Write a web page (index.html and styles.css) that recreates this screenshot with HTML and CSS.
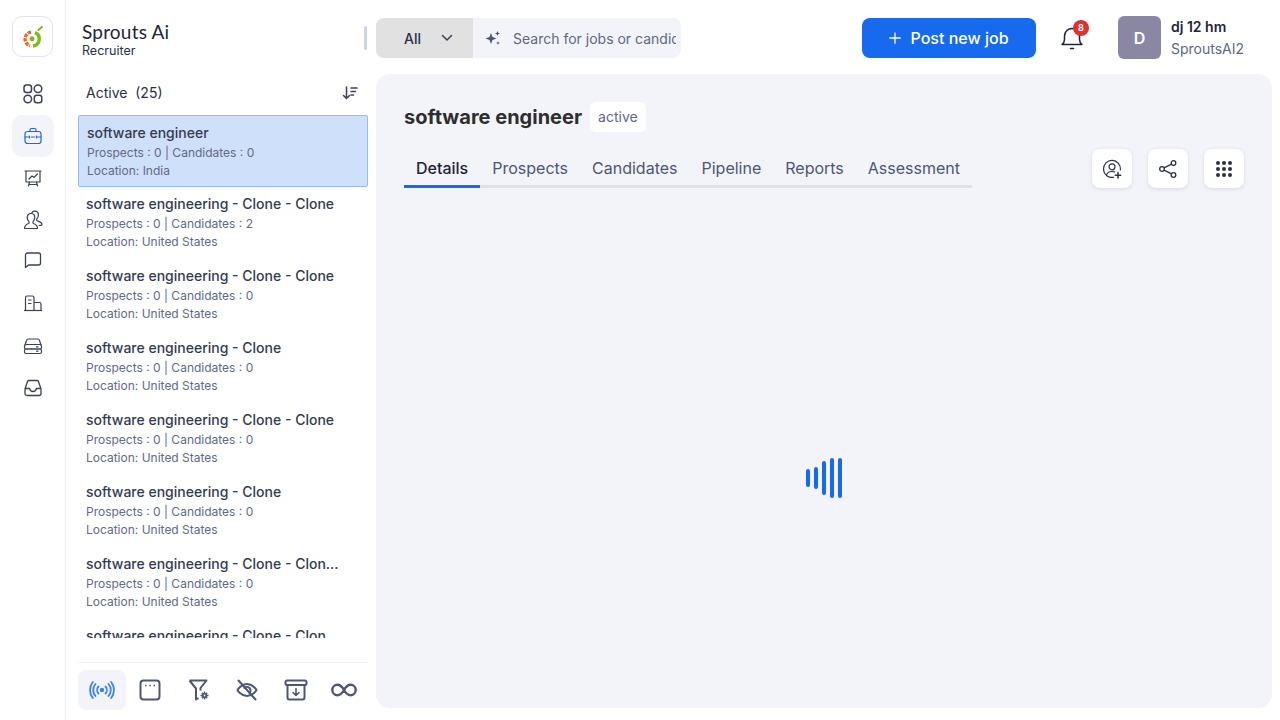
FILE: index.html
```html
<!DOCTYPE html>
<html>
<head>
  <title>Sprouts Ai Recruiter</title>
  <link rel="stylesheet" href="styles.css">
</head>
<body>
  <div class="app">
    <!-- Icon rail -->
    <nav class="rail">
      <div class="logo-box">
        <svg width="24" height="24" viewBox="0 0 24 24" fill="none">
          <path d="M10 7.100A7 7 0 0 0 9 20.700" stroke="#f0672b" stroke-width="3.400" stroke-dasharray="3.400 1"/>
          <path d="M12 21a7 7 0 0 0 2-13.400" stroke="#84b81f" stroke-width="3.400"/>
          <circle cx="11" cy="13.800" r="2.500" fill="#84b81f"/>
          <path d="M17.500 5l3.500-3.200" stroke="#84b81f" stroke-width="2" stroke-linecap="round"/>
        </svg>
      </div>
      <a class="rail-btn">
        <svg width="22" height="22" viewBox="0 0 22 22" fill="none" stroke="#3b4157" stroke-width="1.500">
          <rect x="2" y="2" width="7.500" height="7.500" rx="2.500"/><circle cx="16" cy="5.800" r="3.800"/><circle cx="5.800" cy="16" r="3.800"/><rect x="12.300" y="12.300" width="7.500" height="7.500" rx="2.500"/>
        </svg>
      </a>
      <a class="rail-btn rail-btn-active">
        <svg width="20" height="20" viewBox="0 0 20 20" fill="none" stroke="#1769ee" stroke-width="1.200" stroke-linecap="round">
          <rect x="2" y="5.500" width="16" height="12" rx="2.500"/><path d="M7 5.500V4a1.500 1.500 0 0 1 1.500-1.500h3A1.500 1.500 0 0 1 13 4v1.500"/><path d="M2 11h3.500M8.500 11h3M14.500 11H18"/><path d="M6.500 10v2M13.500 10v2"/>
        </svg>
      </a>
      <a class="rail-btn">
        <svg width="20" height="20" viewBox="0 0 20 20" fill="none" stroke="#3b4157" stroke-width="1.200" stroke-linecap="round" stroke-linejoin="round">
          <path d="M2 3h16M3 3v11h14V3"/><path d="M6 11l3-3 2 1.500L14.500 6"/><path d="M6.500 14L5.500 18M13.500 14l1 4M5.800 16.500h8.400"/>
        </svg>
      </a>
      <a class="rail-btn">
        <svg width="20" height="20" viewBox="0 0 20 20" fill="none" stroke="#3b4157" stroke-width="1.200" stroke-linecap="round" stroke-linejoin="round">
          <path d="M1.500 18.500c0-3 1.500-4 4-5 .8-.4.800-1.500.2-2.200C4.500 10 4.200 8.800 4.200 7.500 4.200 5 6 3.500 8 3.500S11.800 5 11.800 7.500c0 1.300-.3 2.500-1.500 3.800-.6.700-.6 1.800.2 2.200 2.500 1 4 2 4 5z"/>
          <path d="M9 2.500C9.700 1.800 10.500 1.200 11.700 1.200c2 0 3.700 1.500 3.700 4 0 1.300-.4 2.500-1.500 3.700-.5.700-.4 1.500.4 1.900 2 .8 4.700 1.400 4.700 3.700 0 .6-1 1-3 1"/>
        </svg>
      </a>
      <a class="rail-btn">
        <svg width="20" height="20" viewBox="0 0 20 20" fill="none" stroke="#3b4157" stroke-width="1.300" stroke-linejoin="round">
          <path d="M2.500 15.500V3a2 2 0 0 1 2-2h11a2 2 0 0 1 2 2v8a2 2 0 0 1-2 2H5.500z"/>
        </svg>
      </a>
      <a class="rail-btn">
        <svg width="20" height="20" viewBox="0 0 20 20" fill="none" stroke="#3b4157" stroke-width="1.200">
          <path d="M1 16.500h18"/><path d="M2.500 16.500V3.500A1.500 1.500 0 0 1 4 2h5.500A1.500 1.500 0 0 1 11 3.500v13"/><path d="M11 8.500h5.500a1.500 1.500 0 0 1 1.500 1.500v6.500"/><path d="M5 6h3.500M5 9.500h3.500"/>
        </svg>
      </a>
      <a class="rail-btn">
        <svg width="20" height="20" viewBox="0 0 20 20" fill="none" stroke="#3b4157" stroke-width="1.200" stroke-linecap="round">
          <path d="M2 9l1.500-4.500A2 2 0 0 1 5.400 3h9.200a2 2 0 0 1 1.900 1.500L18 9"/><rect x="1.500" y="8.500" width="17" height="4.500" rx="1.800"/><rect x="1.500" y="13" width="17" height="4.500" rx="1.800"/><path d="M13.500 10.800h1.500M13.500 15.200h1.500"/>
        </svg>
      </a>
      <a class="rail-btn">
        <svg width="20" height="20" viewBox="0 0 20 20" fill="none" stroke="#3b4157" stroke-width="1.300" stroke-linejoin="round">
          <path d="M2 11l2.500-7.500A1.500 1.500 0 0 1 6 2.500h8a1.500 1.500 0 0 1 1.500 1L18 11v4.500a2 2 0 0 1-2 2H4a2 2 0 0 1-2-2z"/><path d="M2 10.500h4.500c.5 2 2 3 3.500 3s3-1 3.500-3H18"/>
        </svg>
      </a>
    </nav>

    <div class="content">
      <!-- Top bar -->
      <header class="topbar">
        <div class="brand">
          <div class="brand-name">Sprouts Ai</div>
          <div class="brand-sub">Recruiter</div>
        </div>
        <div class="topbar-handle"></div>
        <div class="search">
          <div class="search-type">
            <span>All</span>
            <svg width="12" height="12" viewBox="0 0 12 12" fill="none" stroke="#3b4157" stroke-width="1.500" stroke-linecap="round" stroke-linejoin="round"><path d="M1.500 3.500L6 8l4.500-4.500"/></svg>
          </div>
          <div class="search-box">
            <svg width="16" height="16" viewBox="0 0 16 16" fill="#4e5675"><path d="M6 3l1.500 4L11.500 8.500 7.500 10 6 14l-1.500-4L.5 8.500 4.500 7z"/><path d="M12.500 1l.7 1.800 1.800.7-1.800.7-.7 1.800-.7-1.800-1.800-.7 1.800-.7z"/><path d="M13 11l.5 1.500 1.500.5-1.500.5-.5 1.500-.5-1.500-1.500-.5 1.500-.5z"/></svg>
            <div class="search-text">Search for jobs or candidates</div>
          </div>
        </div>
        <button class="post-btn">
          <svg width="12" height="12" viewBox="0 0 12 12" fill="none" stroke="#fff" stroke-width="1.300" stroke-linecap="round"><path d="M6 .8v10.400M.8 6h10.400"/></svg>
          Post new job
        </button>
        <div class="bell">
          <svg width="24" height="26" viewBox="0 0 24 26" fill="none" stroke="#1f2437" stroke-width="1.500" stroke-linecap="round" stroke-linejoin="round"><path d="M2 19.500c1.500-1.200 2.500-2.500 2.500-5V11a7.500 7.500 0 0 1 15 0v3.500c0 2.500 1 3.800 2.500 5z"/><path d="M10.500 23.500h3"/></svg>
          <span class="bell-count">8</span>
        </div>
        <div class="user">
          <div class="avatar">D</div>
          <div>
            <div class="user-name">dj 12 hm</div>
            <div class="user-org">SproutsAI2</div>
          </div>
        </div>
      </header>

      <div class="body">
        <!-- Job list -->
        <aside class="jobs">
          <div class="jobs-head">
            <span>Active&nbsp; (25)</span>
            <svg width="16" height="16" viewBox="0 0 16 16" fill="none" stroke="#3b4157" stroke-width="1.500" stroke-linecap="round" stroke-linejoin="round"><path d="M4.500 2v11.500M1.500 10.500l3 3 3-3"/><path d="M9 3h6M9 6.500h4.500M9 10h2.500"/></svg>
          </div>
          <div class="job-list">
            <div class="job job-active">
              <div class="job-title">software engineer</div>
              <div class="job-meta">Prospects : 0 | Candidates : 0</div>
              <div class="job-meta">Location: India</div>
            </div>
            <div class="job">
              <div class="job-title">software engineering - Clone - Clone</div>
              <div class="job-meta">Prospects : 0 | Candidates : 2</div>
              <div class="job-meta">Location: United States</div>
            </div>
            <div class="job">
              <div class="job-title">software engineering - Clone - Clone</div>
              <div class="job-meta">Prospects : 0 | Candidates : 0</div>
              <div class="job-meta">Location: United States</div>
            </div>
            <div class="job">
              <div class="job-title">software engineering - Clone</div>
              <div class="job-meta">Prospects : 0 | Candidates : 0</div>
              <div class="job-meta">Location: United States</div>
            </div>
            <div class="job">
              <div class="job-title">software engineering - Clone - Clone</div>
              <div class="job-meta">Prospects : 0 | Candidates : 0</div>
              <div class="job-meta">Location: United States</div>
            </div>
            <div class="job">
              <div class="job-title">software engineering - Clone</div>
              <div class="job-meta">Prospects : 0 | Candidates : 0</div>
              <div class="job-meta">Location: United States</div>
            </div>
            <div class="job">
              <div class="job-title">software engineering - Clone - Clon...</div>
              <div class="job-meta">Prospects : 0 | Candidates : 0</div>
              <div class="job-meta">Location: United States</div>
            </div>
            <div class="job">
              <div class="job-title">software engineering - Clone - Clon...</div>
              <div class="job-meta">Prospects : 0 | Candidates : 0</div>
              <div class="job-meta">Location: United States</div>
            </div>
          </div>
          <div class="jobs-foot">
            <a class="foot-btn foot-btn-active">
              <svg width="26" height="20" viewBox="0 0 26 20" fill="none" stroke="#3b82ee" stroke-width="1.800" stroke-linecap="round"><circle cx="13" cy="10" r="1.300" fill="#3b82ee"/><path d="M9.500 6.500a5 5 0 0 0 0 7M16.500 6.500a5 5 0 0 1 0 7"/><path d="M6.500 4a9 9 0 0 0 0 12M19.500 4a9 9 0 0 1 0 12"/><path d="M3.800 2a13 13 0 0 0 0 16M22.200 2a13 13 0 0 1 0 16"/></svg>
            </a>
            <a class="foot-btn">
              <svg width="22" height="22" viewBox="0 0 22 22" fill="none" stroke="#4e5675" stroke-width="2"><rect x="1.500" y="1.500" width="19" height="19" rx="3"/><path d="M6 6.500h1.500M10.300 6.500h1.500M14.500 6.500H16" stroke-width="1.500"/></svg>
            </a>
            <a class="foot-btn">
              <svg width="22" height="22" viewBox="0 0 22 22" fill="none" stroke="#4e5675" stroke-width="2" stroke-linejoin="round"><path d="M1.500 1.500h17l-6 7.500v2.500M1.500 1.500l6.500 8v11l2.500-1.500"/><circle cx="16.500" cy="16.500" r="1.800" stroke-width="1.800"/><path d="M16.500 12.500v1.500M16.500 19v1.500M12.500 16.500H14M19 16.500h1.500M13.800 13.800l1 1M18.200 18.200l1 1M19.200 13.800l-1 1M14.800 18.200l-1 1" stroke-width="1.400"/></svg>
            </a>
            <a class="foot-btn">
              <svg width="22" height="22" viewBox="0 0 22 22" fill="none" stroke="#4e5675" stroke-width="2" stroke-linecap="round" stroke-linejoin="round"><path d="M1.500 11s3.500-6 9.500-6 9.500 6 9.500 6-3.500 6-9.500 6-9.500-6-9.500-6z"/><path d="M8.500 9a3.500 3.500 0 0 1 5 5"/><path d="M2.500 1.500l17 19"/></svg>
            </a>
            <a class="foot-btn">
              <svg width="24" height="22" viewBox="0 0 24 22" fill="none" stroke="#4e5675" stroke-width="2" stroke-linecap="round" stroke-linejoin="round"><rect x="1.500" y="1.500" width="21" height="4.500" rx="1.500"/><path d="M3.500 6v12.500a2 2 0 0 0 2 2h13a2 2 0 0 0 2-2V6"/><path d="M12 9.500v6.500M9 13.500l3 3 3-3" stroke-width="1.600"/></svg>
            </a>
            <a class="foot-btn">
              <svg width="26" height="14" viewBox="0 0 26 14" fill="none" stroke="#4e5675" stroke-width="2.400"><path d="M13 7C11 3.500 9 1.800 6.500 1.800a5.200 5.200 0 0 0 0 10.400C9 12.200 11 10.500 13 7s4-5.200 6.500-5.200a5.200 5.200 0 0 1 0 10.400C17 12.200 15 10.500 13 7z"/></svg>
            </a>
          </div>
        </aside>

        <!-- Job detail -->
        <main class="detail">
          <div class="detail-head">
            <h1>software engineer</h1>
            <span class="status">active</span>
          </div>
          <div class="tab-row">
            <div class="tabs">
              <a class="tab tab-active">Details</a>
              <a class="tab">Prospects</a>
              <a class="tab">Candidates</a>
              <a class="tab">Pipeline</a>
              <a class="tab">Reports</a>
              <a class="tab">Assessment</a>
            </div>
            <div class="actions">
              <button class="action">
                <svg width="20" height="20" viewBox="0 0 20 20" fill="none" stroke="#2b3046" stroke-width="1.200" stroke-linecap="round"><path d="M11.500 18.300A8.500 8.500 0 1 1 18.400 11"/><circle cx="10" cy="7.800" r="3"/><path d="M4.500 16c.7-2.500 3-3.500 5.500-3.500 1 0 1.800.1 2.500.4"/><path d="M16 13.500v5.500M13.300 16.200h5.400" stroke-width="1.500"/></svg>
              </button>
              <button class="action">
                <svg width="20" height="20" viewBox="0 0 20 20" fill="none" stroke="#2b3046" stroke-width="1.300"><circle cx="4" cy="10" r="2.300"/><circle cx="15.500" cy="4" r="2.300"/><circle cx="15.500" cy="16" r="2.300"/><path d="M6 8.900l7.500-3.800M6 11.100l7.500 3.800"/></svg>
              </button>
              <button class="action">
                <svg width="18" height="18" viewBox="0 0 18 18" fill="#2b3046"><circle cx="3" cy="3" r="2"/><circle cx="9" cy="3" r="2"/><circle cx="15" cy="3" r="2"/><circle cx="3" cy="9" r="2"/><circle cx="9" cy="9" r="2"/><circle cx="15" cy="9" r="2"/><circle cx="3" cy="15" r="2"/><circle cx="9" cy="15" r="2"/><circle cx="15" cy="15" r="2"/></svg>
              </button>
            </div>
          </div>
          <div class="loader-wrap">
            <div class="loader">
              <span class="bar bar-1"></span>
              <span class="bar bar-2"></span>
              <span class="bar bar-3"></span>
              <span class="bar bar-4"></span>
              <span class="bar bar-4"></span>
            </div>
          </div>
        </main>
      </div>
    </div>
  </div>
</body>
</html>
```

FILE: styles.css
```css
/* Page */
* {
  box-sizing: border-box;
}

body {
  margin: 0;
  font-family: Inter, "Noto Sans", sans-serif;
  background-color: #fff;
  color: #1f2437;
  overflow: hidden;
}

button {
  font-family: inherit;
  border: none;
  cursor: pointer;
}

.app {
  display: flex;
  height: 720px;
}

/* Icon rail */
.rail {
  width: 66px;
  flex-shrink: 0;
  padding: 16px 0 0 12px;
  border-right: 1px solid #eff0f4;
  display: flex;
  flex-direction: column;
}

.logo-box {
  width: 41px;
  height: 41px;
  border: 1px solid #e2e3ee;
  border-radius: 10px;
  margin-bottom: 16px;
  display: flex;
  align-items: center;
  justify-content: center;
}

.rail-btn {
  width: 42px;
  height: 42px;
  flex-shrink: 0;
  border-radius: 10px;
  display: flex;
  align-items: center;
  justify-content: center;
}

.rail-btn-active {
  background-color: #f3f4f9;
}

/* Right side */
.content {
  flex: 1;
  min-width: 0;
  display: flex;
  flex-direction: column;
}

/* Top bar */
.topbar {
  height: 74px;
  flex-shrink: 0;
  display: flex;
  align-items: center;
  padding: 2px 0 0 16px;
}

.brand {
  width: 282px;
  padding-top: 2px;
}

.brand-name {
  font-family: Lato, sans-serif;
  font-size: 19px;
  line-height: 22px;
  color: #1f2437;
  letter-spacing: 0.2px;
}

.brand-sub {
  font-size: 12.5px;
  line-height: 15px;
  color: #2b3046;
}

.topbar-handle {
  width: 3px;
  height: 24px;
  background-color: #cbd5e1;
  border-radius: 2px;
}

.search {
  width: 305px;
  height: 40px;
  margin-left: 9px;
  display: flex;
  border-radius: 8px;
  overflow: hidden;
  background-color: #f3f4f9;
}

.search-type {
  width: 97px;
  flex-shrink: 0;
  padding: 0 20px 0 28px;
  display: flex;
  align-items: center;
  justify-content: space-between;
  background-color: #e1e1e1;
  font-size: 14px;
  font-weight: 500;
  color: #2b3046;
}

.search-box {
  flex: 1;
  min-width: 0;
  padding: 0 5px 0 12px;
  display: flex;
  align-items: center;
  gap: 12px;
}

.search-box svg {
  flex-shrink: 0;
}

.search-text {
  font-size: 14px;
  color: #5f6786;
  white-space: nowrap;
  overflow: hidden;
}

.post-btn {
  width: 174px;
  height: 40px;
  margin-left: 181px;
  display: flex;
  align-items: center;
  justify-content: center;
  gap: 9px;
  background-color: #1769ee;
  color: #fff;
  border-radius: 8px;
  font-size: 16px;
  font-weight: 500;
}

.bell {
  position: relative;
  margin-left: 24px;
  width: 24px;
  height: 26px;
}

.bell-count {
  position: absolute;
  top: -5px;
  left: 13px;
  width: 16px;
  height: 16px;
  border-radius: 50%;
  background-color: #e03131;
  color: #fff;
  font-size: 9px;
  font-weight: 700;
  line-height: 16px;
  text-align: center;
}

.user {
  margin-left: 34px;
  display: flex;
  align-items: center;
  gap: 10px;
}

.avatar {
  width: 43px;
  height: 43px;
  margin-top: -1px;
  border-radius: 6px;
  background-color: #8a87a5;
  color: #fff;
  font-size: 16px;
  font-weight: 600;
  display: flex;
  align-items: center;
  justify-content: center;
}

.user-name {
  font-size: 14px;
  font-weight: 600;
  line-height: 20px;
  color: #1f2437;
  margin-bottom: 2px;
}

.user-org {
  font-size: 14px;
  line-height: 20px;
  color: #5f6786;
}

/* Body under the top bar */
.body {
  flex: 1;
  min-height: 0;
  display: flex;
  padding: 0 8px 12px 0;
}

/* Job list */
.jobs {
  width: 310px;
  flex-shrink: 0;
  padding: 0 8px 0 12px;
  display: flex;
  flex-direction: column;
}

.jobs-head {
  height: 41px;
  flex-shrink: 0;
  padding: 0 10px 4px 8px;
  display: flex;
  align-items: center;
  justify-content: space-between;
  font-size: 14px;
  color: #2b3046;
}

.job-list {
  height: 523px;
  flex-shrink: 0;
  margin-bottom: 24px;
  overflow: hidden;
}

.job {
  height: 72px;
  padding: 7px 8px 0;
  font-size: 12px;
}

.job-active {
  padding: 7px 8px 0;
  background-color: #cfe0fa;
  border: 1px solid #93bbf5;
  border-radius: 2px;
}

.job-title {
  font-size: 14px;
  font-weight: 500;
  line-height: 20px;
  margin-bottom: 1px;
  color: #353b50;
  white-space: nowrap;
}

.job-meta {
  line-height: 18px;
  color: #626a85;
}

.jobs-foot {
  flex: 1;
  border-top: 1px solid #f3f4f9;
  padding-top: 7px;
  display: flex;
  justify-content: space-between;
}

.foot-btn {
  width: 48px;
  height: 40px;
  border-radius: 8px;
  display: flex;
  align-items: center;
  justify-content: center;
}

.foot-btn-active {
  background-color: #f3f4f9;
}

/* Job detail */
.detail {
  flex: 1;
  min-width: 0;
  padding: 28px 28px 0;
  background-color: #f3f4f9;
  border-radius: 14px;
  display: flex;
  flex-direction: column;
}

.detail-head {
  display: flex;
  align-items: center;
  gap: 8px;
}

h1 {
  margin: 0;
  font-size: 20px;
  font-weight: 700;
  color: #2e2e2e;
}

.status {
  height: 30px;
  padding: 0 8px;
  background-color: #fff;
  border-radius: 6px;
  font-size: 14px;
  line-height: 30px;
  color: #5f6786;
}

.tab-row {
  margin-top: 17px;
  display: flex;
  align-items: flex-end;
  justify-content: space-between;
}

.tabs {
  display: flex;
  border-bottom: 3px solid #e0e0ea;
}

.tab {
  padding: 0 12px 6px;
  margin-bottom: -3px;
  border-bottom: 3px solid transparent;
  font-size: 16px;
  line-height: 22px;
  color: #4e5675;
}

.tab-active {
  color: #1f2437;
  font-weight: 500;
  border-bottom-color: #1769ee;
}

.actions {
  display: flex;
  gap: 16px;
}

.action {
  width: 40px;
  height: 39px;
  padding: 0;
  background-color: #fff;
  border-radius: 8px;
  box-shadow: 0 1px 4px rgba(31, 36, 55, 0.12);
  display: flex;
  align-items: center;
  justify-content: center;
}

/* Loader */
.loader-wrap {
  flex: 1;
  padding-top: 60px;
  display: flex;
  align-items: center;
  justify-content: center;
}

.loader {
  display: flex;
  align-items: center;
  gap: 4px;
}

.bar {
  width: 4px;
  background-color: #1769ee;
  border-radius: 2px;
}

.bar-1 { height: 18px; }
.bar-2 { height: 22px; }
.bar-3 { height: 34px; }
.bar-4 { height: 40px; }
```
